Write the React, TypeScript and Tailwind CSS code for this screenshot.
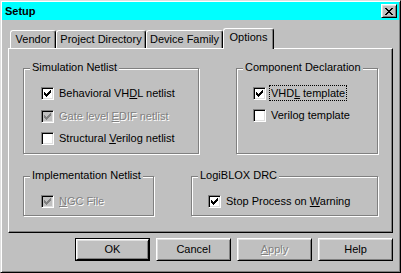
import React from "react";

function Tick({ disabled }: { disabled?: boolean }) {
  return (
    <svg width="7" height="7" viewBox="0 0 7 7" shapeRendering="crispEdges" className="block">
      <path
        fill={disabled ? "#808080" : "#000"}
        d="M6 0h1v1H6z M5 1h2v1H5z M0 2h1v1H0z M4 2h3v1H4z M0 3h2v1H0z M3 3h3v1H3z M0 4h5v1H0z M1 5h3v1H1z M2 6h1v1H2z"
      />
    </svg>
  );
}

function CloseGlyph() {
  return (
    <svg width="8" height="7" viewBox="0 0 8 7" shapeRendering="crispEdges" className="block">
      <path
        fill="#000"
        d="M0 0h2v1H0z M6 0h2v1H6z M1 1h2v1H1z M5 1h2v1H5z M2 2h4v1H2z M3 3h2v1H3z M2 4h4v1H2z M1 5h2v1H1z M5 5h2v1H5z M0 6h2v1H0z M6 6h2v1H6z"
      />
    </svg>
  );
}

function Option({
  label,
  checked,
  disabled,
  focused,
  className = "",
}: {
  label: React.ReactNode;
  checked?: boolean;
  disabled?: boolean;
  focused?: boolean;
  className?: string;
}) {
  return (
    <div className={`flex items-start h-[16px] ${className}`}>
      <span
        className={`mt-[2px] flex w-[13px] h-[13px] shrink-0 items-center justify-center border border-t-[#808080] border-l-[#808080] border-r-white border-b-white shadow-[inset_1px_1px_0_#000,inset_-1px_-1px_0_#dfdfdf] ${
          disabled ? "bg-[#c0c0c0]" : "bg-white"
        }`}
      >
        {checked && <Tick disabled={disabled} />}
      </span>
      <span
        className={`ml-[3px] h-[16px] px-[1px] border leading-[14px] whitespace-nowrap ${
          focused ? "border-dotted border-black" : "border-transparent"
        } ${disabled ? "text-[#808080] [text-shadow:1px_1px_0_#fff]" : "text-black"}`}
      >
        {label}
      </span>
    </div>
  );
}

function Group({
  title,
  className,
  children,
}: {
  title: string;
  className: string;
  children: React.ReactNode;
}) {
  return (
    <div
      className={`relative border border-[#808080] shadow-[1px_1px_0_#fff,inset_1px_1px_0_#fff] ${className}`}
    >
      <span className="absolute -top-[8px] left-[6px] h-[13px] bg-[#c0c0c0] px-[2px] leading-[13px] whitespace-nowrap">
        {title}
      </span>
      {children}
    </div>
  );
}

function Tab({ label, w, active }: { label: string; w: string; active?: boolean }) {
  return (
    <div
      className={`${w} ${
        active ? "relative z-10 -mb-[1px] h-[21px]" : "h-[18px]"
      } flex justify-center pt-[2px] bg-[#c0c0c0] border-t border-l border-white border-r border-r-black rounded-t-[3px] shadow-[inset_-1px_0_0_#808080] leading-[13px] whitespace-nowrap`}
    >
      {label}
    </div>
  );
}

function Button({
  children,
  primary,
  disabled,
}: {
  children: React.ReactNode;
  primary?: boolean;
  disabled?: boolean;
}) {
  return (
    <div className={`w-[75px] h-[23px] ${primary ? "border border-black" : ""}`}>
      <div
        className={`h-full flex items-center justify-center border border-t-white border-l-white border-r-black border-b-black shadow-[inset_1px_1px_0_#dfdfdf,inset_-1px_-1px_0_#808080] ${
          disabled ? "text-[#808080] [text-shadow:1px_1px_0_#fff]" : "text-black"
        }`}
      >
        {children}
      </div>
    </div>
  );
}

export default function App() {
  return (
    <div className="w-[401px] h-[273px] overflow-hidden bg-[#c0c0c0] p-[1px] border border-t-[#dfdfdf] border-l-[#dfdfdf] border-r-black border-b-black shadow-[inset_1px_1px_0_#fff,inset_-1px_-1px_0_#808080] font-['Liberation_Sans',Arial,sans-serif] text-[11px] text-black">
      {/* title bar */}
      <div className="h-[18px] flex items-center justify-between bg-[#00ffff] pl-[3px] pr-[2px]">
        <span className="font-bold leading-[13px]">Setup</span>
        <div className="w-[16px] h-[14px] flex items-center justify-center bg-[#c0c0c0] border border-t-white border-l-white border-r-black border-b-black shadow-[inset_1px_1px_0_#dfdfdf,inset_-1px_-1px_0_#808080]">
          <CloseGlyph />
        </div>
      </div>

      {/* tabs */}
      <div className="mt-[8px] flex items-end pl-[8px]">
        <Tab label="Vendor" w="w-[46px]" />
        <Tab label="Project Directory" w="w-[90px]" />
        <Tab label="Device Family" w="w-[77px]" />
        <Tab label="Options" w="w-[51px]" active />
      </div>

      {/* panel */}
      <div className="mx-[6px] h-[185px] border border-t-white border-l-white border-r-black border-b-black shadow-[inset_-1px_-1px_0_#808080] px-[14px] pt-[19px]">
        <div className="flex justify-between">
          <Group title="Simulation Netlist" className="w-[176px] h-[86px] pl-[17px] pt-[16px]">
            <Option
              checked
              label={
                <>
                  Behavioral VH<u>D</u>L netlist
                </>
              }
            />
            <Option
              checked
              disabled
              className="mt-[7px]"
              label={
                <>
                  Gate level <u>E</u>DIF netlist
                </>
              }
            />
            <Option
              className="mt-[6px]"
              label={
                <>
                  Structural <u>V</u>erilog netlist
                </>
              }
            />
          </Group>
          <Group title="Component Declaration" className="w-[142px] h-[86px] pl-[16px] pt-[16px]">
            <Option
              checked
              focused
              label={
                <>
                  VHD<u>L</u> template
                </>
              }
            />
            <Option className="mt-[6px]" label="Verilog template" />
          </Group>
        </div>
        <div className="mt-[22px] flex justify-between">
          <Group title="Implementation Netlist" className="w-[131px] h-[40px] pl-[17px] pt-[16px]">
            <Option
              checked
              disabled
              label={
                <>
                  <u>N</u>GC File
                </>
              }
            />
          </Group>
          <Group title="LogiBLOX DRC" className="w-[187px] h-[40px] pl-[16px] pt-[16px]">
            <Option
              checked
              label={
                <>
                  Stop Process on <u>W</u>arning
                </>
              }
            />
          </Group>
        </div>
      </div>

      {/* buttons */}
      <div className="mt-[5px] flex justify-end gap-[6px] pr-[6px]">
        <Button primary>OK</Button>
        <Button>Cancel</Button>
        <Button disabled>
          <span>
            <u>A</u>pply
          </span>
        </Button>
        <Button>Help</Button>
      </div>
    </div>
  );
}
